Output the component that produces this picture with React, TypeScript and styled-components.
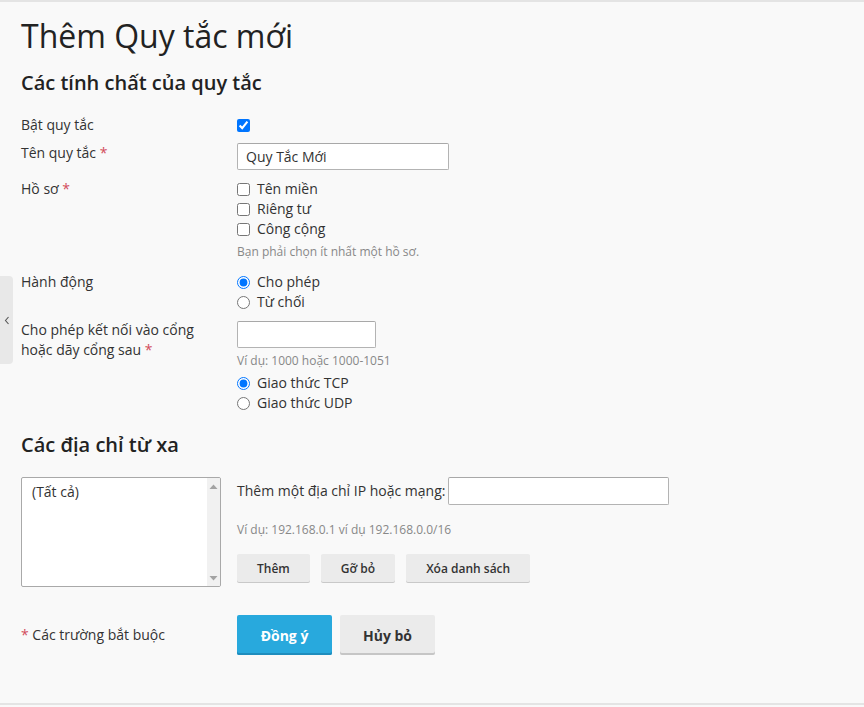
import React from "react";
import styled, { createGlobalStyle } from "styled-components";

const Global = createGlobalStyle`
  html, body { margin: 0; padding: 0; background: #f9f9f9; }
  body { font-family: "Open Sans", "Noto Sans", sans-serif; color: #333; font-size: 14px; line-height: 20px; }
  * { box-sizing: border-box; }
`;

const Page = styled.div`
  position: relative;
  height: 707px;
  border-top: 2px solid #e4e4e4;
  padding: 0 21px;
  overflow: hidden;
  &::after {
    content: "";
    position: absolute;
    left: 0; right: 0; top: 701px;
    height: 2px;
    background: #e4e4e4;
  }
`;

const Title = styled.h1`
  margin: 14px 0 0;
  font-size: 32px;
  line-height: 40px;
  font-weight: 400;
  color: #222;
`;

const SectionTitle = styled.h2<{ $mt: number }>`
  margin: ${(p) => p.$mt}px 0 0;
  font-size: 20px;
  line-height: 28px;
  font-weight: 600;
  color: #222;
`;

const Row = styled.div<{ $mt: number }>`
  display: grid;
  grid-template-columns: 216px 1fr;
  margin-top: ${(p) => p.$mt}px;
  align-items: start;
`;

const Label = styled.div`
  color: #333;
`;

const Req = styled.span`
  color: #d24c5c;
`;

const Controls = styled.div`
  display: flex;
  flex-direction: column;
  align-items: flex-start;
`;

const Check = styled.input`
  margin: 0;
  width: 13px;
  height: 13px;
  flex: none;
`;

const OptionLine = styled.label`
  display: flex;
  align-items: center;
  gap: 7px;
  height: 20px;
  color: #333;
`;

const CheckLine = styled.div`
  display: flex;
  align-items: center;
  height: 20px;
`;

const TextInput = styled.input<{ $w: number; $h?: number; $mt?: number }>`
  width: ${(p) => p.$w}px;
  height: ${(p) => p.$h ?? 27}px;
  margin: ${(p) => p.$mt ?? 0}px 0 0;
  border: 1px solid #b3b3b3;
  border-top-color: #a8a8a8;
  border-radius: 2px;
  background: #fff;
  padding: 0 8px;
  font-family: inherit;
  font-size: 14px;
  color: #333;
  outline: none;
`;

const Hint = styled.div<{ $mt: number }>`
  margin-top: ${(p) => p.$mt}px;
  font-size: 12px;
  line-height: 16px;
  color: #888;
`;

const Group = styled.div<{ $mt?: number }>`
  display: flex;
  flex-direction: column;
  margin-top: ${(p) => p.$mt ?? 0}px;
`;

const Remote = styled.div`
  display: grid;
  grid-template-columns: 216px 1fr;
  margin-top: 18px;
`;

const ListBox = styled.div`
  width: 200px;
  height: 110px;
  border: 1px solid #a9a9a9;
  border-radius: 2px;
  background: #fff;
  display: flex;
  overflow: hidden;
`;

const ListItems = styled.div`
  flex: 1;
  padding: 4px 10px;
  color: #333;
`;

const ScrollBar = styled.div`
  width: 13px;
  background: #f1f1f1;
  display: flex;
  flex-direction: column;
  justify-content: space-between;
  align-items: center;
  padding: 6px 0 5px;
`;

const AddLine = styled.div`
  display: flex;
  align-items: center;
  gap: 3px;
  color: #333;
`;

const SmallButtons = styled.div`
  display: flex;
  gap: 11px;
  margin-top: 16px;
`;

const SmallButton = styled.button`
  height: 28px;
  padding: 0 20px;
  border: none;
  border-radius: 2px;
  background: #ebebeb;
  box-shadow: 0 1px 0 #c9c9c9;
  font-family: inherit;
  font-size: 12px;
  font-weight: 600;
  color: #333;
  cursor: pointer;
`;

const Footer = styled.div`
  display: grid;
  grid-template-columns: 216px 1fr;
  align-items: center;
  margin-top: 28px;
`;

const Buttons = styled.div`
  display: flex;
  gap: 8px;
`;

const BigButton = styled.button<{ $primary?: boolean }>`
  width: 95px;
  height: 40px;
  border: none;
  border-radius: 2px;
  background: ${(p) => (p.$primary ? "#28a9dd" : "#ebebeb")};
  box-shadow: inset 0 -2px 0 ${(p) => (p.$primary ? "#1f8dbd" : "#c6c6c6")};
  color: ${(p) => (p.$primary ? "#fff" : "#333")};
  font-family: inherit;
  font-size: 14px;
  font-weight: 700;
  cursor: pointer;
`;

const SideTab = styled.div`
  position: absolute;
  left: 0;
  top: 274px;
  width: 13px;
  height: 88px;
  background: #e8e8e8;
  border-radius: 0 4px 4px 0;
  display: flex;
  align-items: center;
  justify-content: center;
`;

const Arrow = ({ up }: { up?: boolean }) => (
  <svg width="9" height="5" viewBox="0 0 9 5">
    <path d={up ? "M0.5 5 L4.5 0.5 L8.5 5 Z" : "M0.5 0 L4.5 4.5 L8.5 0 Z"} fill="#a3a3a3" />
  </svg>
);

export default function App() {
  return (
    <>
      <Global />
      <Page>
        <SideTab>
          <svg width="6" height="9" viewBox="0 0 6 9">
            <path d="M4.5 1 L1.5 4.5 L4.5 8" stroke="#555" strokeWidth="1.1" fill="none" />
          </svg>
        </SideTab>

        <Title>Thêm Quy tắc mới</Title>
        <SectionTitle $mt={13}>Các tính chất của quy tắc</SectionTitle>

        <Row $mt={18}>
          <Label>Bật quy tắc</Label>
          <CheckLine>
            <Check type="checkbox" defaultChecked />
          </CheckLine>
        </Row>

        <Row $mt={8}>
          <Label>
            Tên quy tắc <Req>*</Req>
          </Label>
          <Controls>
            <TextInput $w={212} defaultValue="Quy Tắc Mới" />
          </Controls>
        </Row>

        <Row $mt={9}>
          <Label>
            Hồ sơ <Req>*</Req>
          </Label>
          <Controls>
            <Group>
              <OptionLine>
                <Check type="checkbox" />
                Tên miền
              </OptionLine>
              <OptionLine>
                <Check type="checkbox" />
                Riêng tư
              </OptionLine>
              <OptionLine>
                <Check type="checkbox" />
                Công cộng
              </OptionLine>
            </Group>
            <Hint $mt={5}>Bạn phải chọn ít nhất một hồ sơ.</Hint>
          </Controls>
        </Row>

        <Row $mt={12}>
          <Label>Hành động</Label>
          <Group>
            <OptionLine>
              <Check type="radio" name="action" defaultChecked />
              Cho phép
            </OptionLine>
            <OptionLine>
              <Check type="radio" name="action" />
              Từ chối
            </OptionLine>
          </Group>
        </Row>

        <Row $mt={8}>
          <Label>
            Cho phép kết nối vào cổng
            <br />
            hoặc dãy cổng sau <Req>*</Req>
          </Label>
          <Controls>
            <TextInput $w={139} $mt={1} />
            <Hint $mt={5}>Ví dụ: 1000 hoặc 1000-1051</Hint>
            <Group $mt={4}>
              <OptionLine>
                <Check type="radio" name="proto" defaultChecked />
                Giao thức TCP
              </OptionLine>
              <OptionLine>
                <Check type="radio" name="proto" />
                Giao thức UDP
              </OptionLine>
            </Group>
          </Controls>
        </Row>

        <SectionTitle $mt={18}>Các địa chỉ từ xa</SectionTitle>

        <Remote>
          <ListBox>
            <ListItems>(Tất cả)</ListItems>
            <ScrollBar>
              <Arrow up />
              <Arrow />
            </ScrollBar>
          </ListBox>
          <Controls>
            <AddLine>
              Thêm một địa chỉ IP hoặc mạng:
              <TextInput $w={221} $h={28} />
            </AddLine>
            <Hint $mt={17}>Ví dụ: 192.168.0.1 ví dụ 192.168.0.0/16</Hint>
            <SmallButtons>
              <SmallButton>Thêm</SmallButton>
              <SmallButton>Gỡ bỏ</SmallButton>
              <SmallButton>Xóa danh sách</SmallButton>
            </SmallButtons>
          </Controls>
        </Remote>

        <Footer>
          <Label>
            <Req>*</Req> Các trường bắt buộc
          </Label>
          <Buttons>
            <BigButton $primary>Đồng ý</BigButton>
            <BigButton>Hủy bỏ</BigButton>
          </Buttons>
        </Footer>
      </Page>
    </>
  );
}
